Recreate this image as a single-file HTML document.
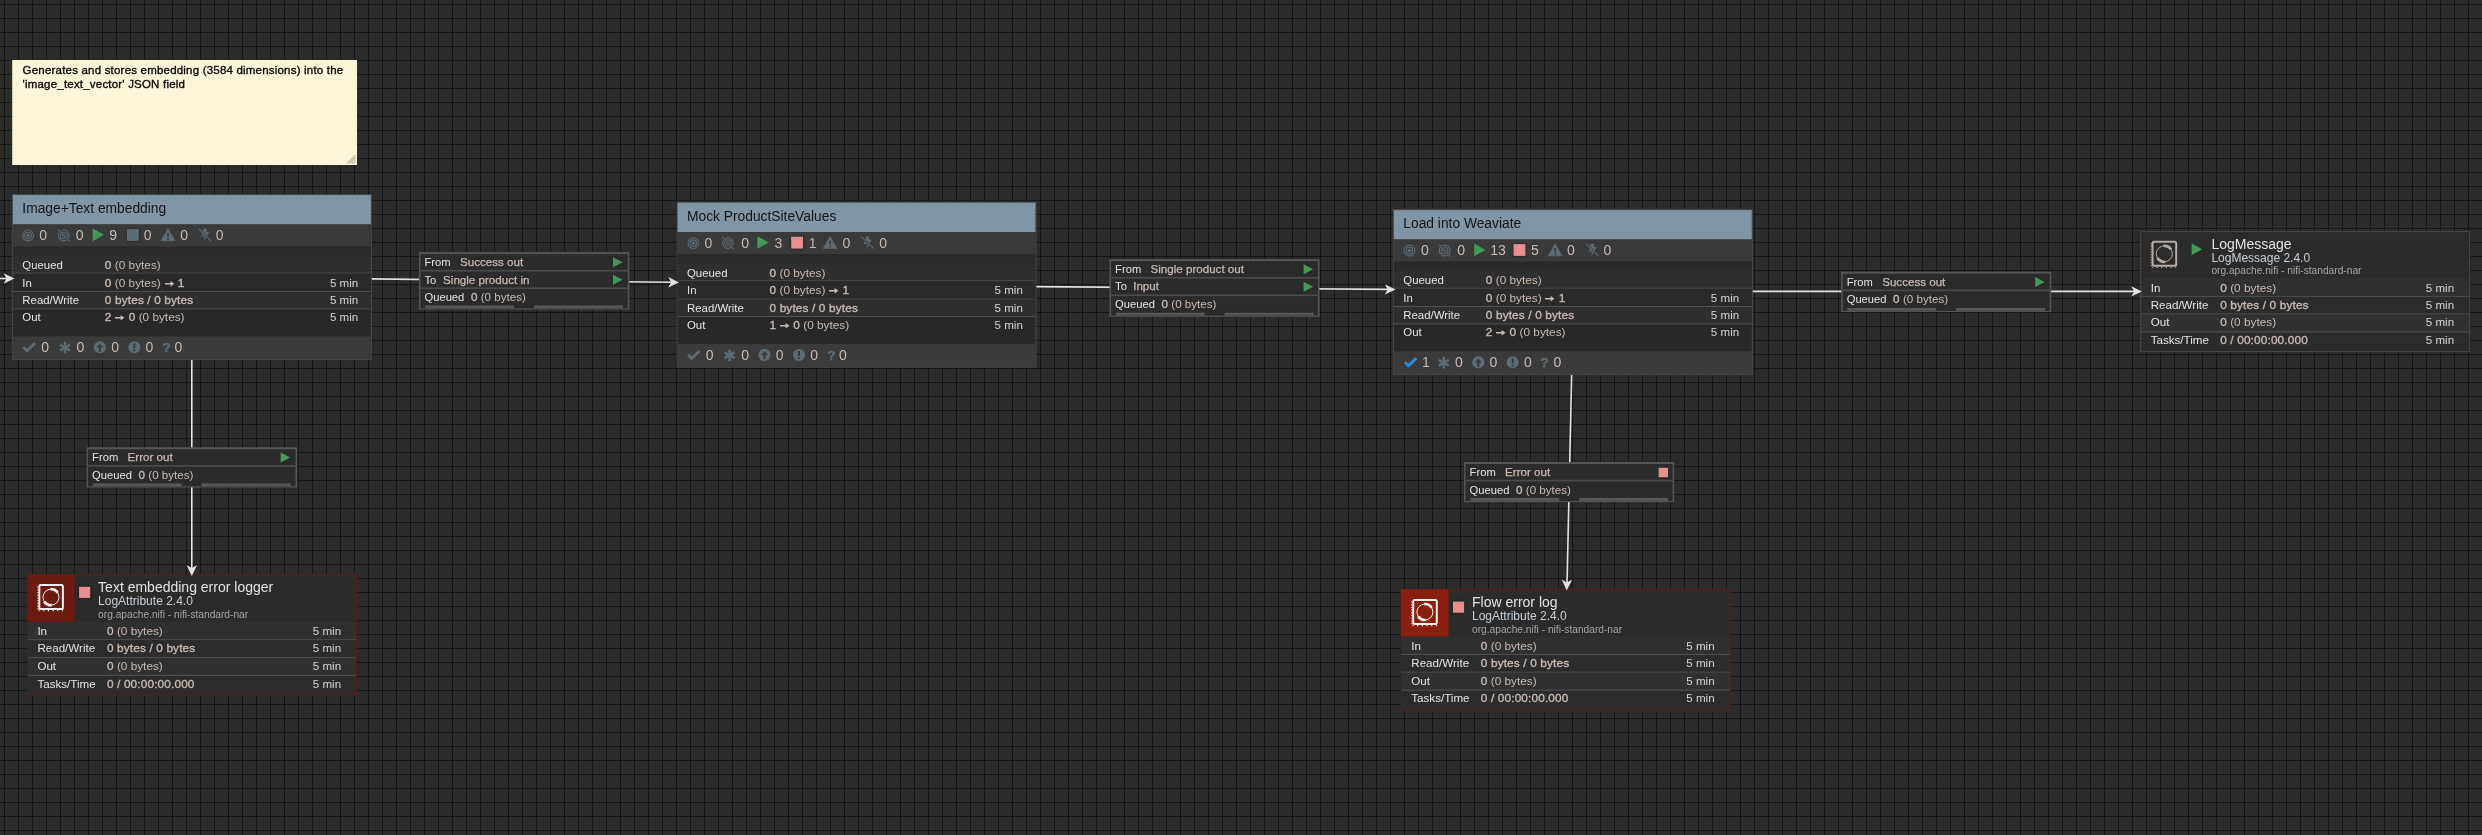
<!DOCTYPE html><html><head><meta charset="utf-8"><style>
html,body{margin:0;padding:0;}
body{width:2482px;height:835px;overflow:hidden;position:relative;background-color:#2b2b2b;
background-image:linear-gradient(to right,#131616 1px,transparent 1px),linear-gradient(to bottom,#131616 1px,transparent 1px);
background-size:14px 14px;background-position:4px 4px;font-family:"Liberation Sans", sans-serif;}
svg.layer{position:absolute;left:0;top:0;}
.txt{position:absolute;left:0;top:0;width:2482px;height:835px;will-change:transform;}
.t{position:absolute;white-space:nowrap;line-height:20px;}
.t b{font-weight:400;-webkit-text-stroke:0.35px currentColor;letter-spacing:0.15px;}
.t .lt{font-weight:400;}
.arw{display:inline-block;vertical-align:0.5px;margin:0 0.5px;}
</style></head><body><svg class="layer" width="2482" height="835" viewBox="0 0 2482 835"><defs><filter id="blur" x="-50%" y="-50%" width="200%" height="200%"><feGaussianBlur stdDeviation="0.8"/></filter></defs><line x1="0" y1="278.5" x2="7" y2="278.5" stroke="#e2e2e2" stroke-width="1.6"/><line x1="371" y1="278.9" x2="672" y2="282.3" stroke="#e2e2e2" stroke-width="1.6"/><line x1="1036" y1="286.6" x2="1389" y2="289.4" stroke="#e2e2e2" stroke-width="1.6"/><line x1="1752" y1="291.4" x2="2135" y2="291.4" stroke="#e2e2e2" stroke-width="1.6"/><line x1="191.8" y1="359" x2="191.8" y2="569" stroke="#e2e2e2" stroke-width="1.6"/><line x1="1571.7" y1="374" x2="1567" y2="584" stroke="#e2e2e2" stroke-width="1.6"/><rect x="12.20" y="60.00" width="344.80" height="105.00" fill="#fdf5d8"/><rect x="11.85" y="194.06" width="360.00" height="166.00" fill="#4a4a4a"/><rect x="12.85" y="195.06" width="358.00" height="164.00" fill="#282828"/><rect x="12.85" y="195.06" width="358.00" height="29.40" fill="#8196a4"/><rect x="12.85" y="224.46" width="358.00" height="22.20" fill="#3a3a3a"/><rect x="12.85" y="246.66" width="358.00" height="9.00" fill="#2a2a2a"/><rect x="12.85" y="255.66" width="358.00" height="17.00" fill="#2f2f2f"/><rect x="12.85" y="272.66" width="358.00" height="1.00" fill="#525252"/><rect x="12.85" y="273.66" width="358.00" height="17.30" fill="#2a2a2a"/><rect x="12.85" y="290.96" width="358.00" height="1.00" fill="#525252"/><rect x="12.85" y="291.96" width="358.00" height="16.40" fill="#2f2f2f"/><rect x="12.85" y="308.36" width="358.00" height="1.00" fill="#525252"/><rect x="12.85" y="336.36" width="358.00" height="22.70" fill="#3b3b3b"/><rect x="676.50" y="201.70" width="360.00" height="166.00" fill="#4a4a4a"/><rect x="677.50" y="202.70" width="358.00" height="164.00" fill="#282828"/><rect x="677.50" y="202.70" width="358.00" height="29.40" fill="#8196a4"/><rect x="677.50" y="232.10" width="358.00" height="22.20" fill="#3a3a3a"/><rect x="677.50" y="254.30" width="358.00" height="9.00" fill="#2a2a2a"/><rect x="677.50" y="263.30" width="358.00" height="17.00" fill="#2f2f2f"/><rect x="677.50" y="280.30" width="358.00" height="1.00" fill="#525252"/><rect x="677.50" y="281.30" width="358.00" height="17.30" fill="#2a2a2a"/><rect x="677.50" y="298.60" width="358.00" height="1.00" fill="#525252"/><rect x="677.50" y="299.60" width="358.00" height="16.40" fill="#2f2f2f"/><rect x="677.50" y="316.00" width="358.00" height="1.00" fill="#525252"/><rect x="677.50" y="344.00" width="358.00" height="22.70" fill="#3b3b3b"/><rect x="1392.80" y="209.10" width="360.00" height="166.00" fill="#4a4a4a"/><rect x="1393.80" y="210.10" width="358.00" height="164.00" fill="#282828"/><rect x="1393.80" y="210.10" width="358.00" height="29.40" fill="#8196a4"/><rect x="1393.80" y="239.50" width="358.00" height="22.20" fill="#3a3a3a"/><rect x="1393.80" y="261.70" width="358.00" height="9.00" fill="#2a2a2a"/><rect x="1393.80" y="270.70" width="358.00" height="17.00" fill="#2f2f2f"/><rect x="1393.80" y="287.70" width="358.00" height="1.00" fill="#525252"/><rect x="1393.80" y="288.70" width="358.00" height="17.30" fill="#2a2a2a"/><rect x="1393.80" y="306.00" width="358.00" height="1.00" fill="#525252"/><rect x="1393.80" y="307.00" width="358.00" height="16.40" fill="#2f2f2f"/><rect x="1393.80" y="323.40" width="358.00" height="1.00" fill="#525252"/><rect x="1393.80" y="351.40" width="358.00" height="22.70" fill="#3b3b3b"/><rect x="418.90" y="252.10" width="210.40" height="57.50" fill="#555555"/><rect x="420.50" y="254.10" width="207.20" height="54.30" fill="#2b2b2b"/><rect x="420.50" y="269.90" width="207.20" height="1.70" fill="#4a4a4a"/><rect x="420.50" y="287.40" width="207.20" height="1.70" fill="#4a4a4a"/><rect x="425.20" y="305.50" width="88.80" height="2.80" fill="#575757"/><rect x="534.00" y="305.50" width="89.00" height="2.80" fill="#575757"/><rect x="1109.50" y="259.10" width="210.00" height="57.70" fill="#555555"/><rect x="1111.10" y="261.10" width="206.80" height="54.50" fill="#2b2b2b"/><rect x="1111.10" y="276.90" width="206.80" height="1.70" fill="#4a4a4a"/><rect x="1111.10" y="294.40" width="206.80" height="1.70" fill="#4a4a4a"/><rect x="1115.80" y="312.70" width="88.80" height="2.80" fill="#575757"/><rect x="1224.60" y="312.70" width="89.00" height="2.80" fill="#575757"/><rect x="1841.10" y="271.70" width="210.20" height="40.40" fill="#555555"/><rect x="1842.70" y="273.70" width="207.00" height="37.20" fill="#2b2b2b"/><rect x="1842.70" y="289.50" width="207.00" height="1.70" fill="#4a4a4a"/><rect x="1847.40" y="308.00" width="88.80" height="2.80" fill="#575757"/><rect x="1956.20" y="308.00" width="89.00" height="2.80" fill="#575757"/><rect x="86.50" y="447.30" width="210.60" height="40.20" fill="#555555"/><rect x="88.10" y="449.30" width="207.40" height="37.00" fill="#2b2b2b"/><rect x="88.10" y="465.10" width="207.40" height="1.70" fill="#4a4a4a"/><rect x="92.80" y="483.40" width="88.80" height="2.80" fill="#575757"/><rect x="201.60" y="483.40" width="89.00" height="2.80" fill="#575757"/><rect x="1464.00" y="462.00" width="210.20" height="40.10" fill="#555555"/><rect x="1465.60" y="464.00" width="207.00" height="36.90" fill="#2b2b2b"/><rect x="1465.60" y="479.80" width="207.00" height="1.70" fill="#4a4a4a"/><rect x="1470.30" y="498.00" width="88.80" height="2.80" fill="#575757"/><rect x="1579.10" y="498.00" width="89.00" height="2.80" fill="#575757"/><rect x="26.90" y="574.50" width="330.20" height="121.20" fill="#2c2c2c"/><rect x="26.90" y="574.50" width="330.20" height="47.30" fill="#2b2b2b"/><rect x="26.90" y="621.80" width="330.20" height="17.50" fill="#303030"/><rect x="26.90" y="639.30" width="330.20" height="1.00" fill="#555555"/><rect x="26.90" y="640.30" width="330.20" height="16.60" fill="#2c2c2c"/><rect x="26.90" y="656.90" width="330.20" height="1.00" fill="#555555"/><rect x="26.90" y="657.90" width="330.20" height="16.90" fill="#313131"/><rect x="26.90" y="674.80" width="330.20" height="1.00" fill="#555555"/><rect x="27.40" y="575.00" width="329.20" height="120.20" fill="none" stroke="#5a1e18" stroke-width="1"/><rect x="26.90" y="574.50" width="47.80" height="47.30" fill="#6c1b10"/><rect x="1400.80" y="589.30" width="329.80" height="121.70" fill="#2c2c2c"/><rect x="1400.80" y="589.30" width="329.80" height="47.30" fill="#2b2b2b"/><rect x="1400.80" y="636.60" width="329.80" height="17.50" fill="#303030"/><rect x="1400.80" y="654.10" width="329.80" height="1.00" fill="#555555"/><rect x="1400.80" y="655.10" width="329.80" height="16.60" fill="#2c2c2c"/><rect x="1400.80" y="671.70" width="329.80" height="1.00" fill="#555555"/><rect x="1400.80" y="672.70" width="329.80" height="16.90" fill="#313131"/><rect x="1400.80" y="689.60" width="329.80" height="1.00" fill="#555555"/><rect x="1401.30" y="589.80" width="328.80" height="120.70" fill="none" stroke="#5a1e18" stroke-width="1"/><rect x="1400.80" y="589.30" width="47.80" height="47.30" fill="#8a1f10"/><rect x="2140.20" y="231.10" width="329.90" height="121.00" fill="#2c2c2c"/><rect x="2140.20" y="231.10" width="329.90" height="47.30" fill="#2b2b2b"/><rect x="2140.20" y="278.40" width="329.90" height="17.50" fill="#303030"/><rect x="2140.20" y="295.90" width="329.90" height="1.00" fill="#555555"/><rect x="2140.20" y="296.90" width="329.90" height="16.60" fill="#2c2c2c"/><rect x="2140.20" y="313.50" width="329.90" height="1.00" fill="#555555"/><rect x="2140.20" y="314.50" width="329.90" height="16.90" fill="#313131"/><rect x="2140.20" y="331.40" width="329.90" height="1.00" fill="#555555"/><rect x="2140.70" y="231.60" width="328.90" height="120.00" fill="none" stroke="#474747" stroke-width="1"/><path d="M14.40 278.50 L3.60 283.70 L6.50 278.50 L3.60 273.30 Z" fill="#e2e2e2"/><path d="M679.00 282.40 L668.14 287.48 L671.10 282.31 L668.26 277.08 Z" fill="#e2e2e2"/><path d="M1395.60 289.50 L1384.76 294.61 L1387.70 289.44 L1384.84 284.21 Z" fill="#e2e2e2"/><path d="M2142.00 291.40 L2131.20 296.60 L2134.10 291.40 L2131.20 286.20 Z" fill="#e2e2e2"/><path d="M191.80 576.00 L186.60 565.20 L191.80 568.10 L197.00 565.20 Z" fill="#e2e2e2"/><path d="M1566.70 590.40 L1561.74 579.49 L1566.87 582.50 L1572.14 579.72 Z" fill="#e2e2e2"/><path d="M355.5 154 L355.5 163.6 L345.8 163.6 Z" fill="#cfcab8"/><g><circle cx="28.15" cy="235.46" r="5.4" fill="none" stroke="#5d6b75" stroke-width="1.1"/><circle cx="28.15" cy="235.46" r="3.2" fill="none" stroke="#5d6b75" stroke-width="1.1"/><circle cx="28.15" cy="235.46" r="1.6" fill="#5d6b75"/></g><g><circle cx="63.75" cy="235.46" r="5.4" fill="none" stroke="#5d6b75" stroke-width="1.1"/><circle cx="63.75" cy="235.46" r="3.2" fill="none" stroke="#5d6b75" stroke-width="1.1"/><circle cx="63.75" cy="235.46" r="1.6" fill="#5d6b75"/><line x1="58.15" y1="229.26000000000002" x2="69.75" y2="241.66" stroke="#3a3a3a" stroke-width="2.2"/><line x1="58.15" y1="229.26000000000002" x2="69.75" y2="241.66" stroke="#5d6b75" stroke-width="1.1"/></g><path d="M92.64999999999999 228.56 L103.94999999999999 234.86 L92.64999999999999 241.16 Z" fill="#43985a"/><rect x="126.14999999999999" y="228.46" width="13.4" height="13.6" fill="#141414" opacity="0.45" filter="url(#blur)"/><rect x="126.94999999999999" y="229.06" width="11.8" height="11.8" fill="#5d6b75"/><path d="M167.95 228.76000000000002 L174.95 240.76000000000002 L160.95 240.76000000000002 Z" fill="#5d6b75" stroke="#5d6b75" stroke-width="0.6" stroke-linejoin="round"/><rect x="167.1" y="233.06000000000003" width="1.7" height="3.8" fill="#3a3a3a"/><rect x="167.1" y="238.16000000000003" width="1.7" height="1.5" fill="#3a3a3a"/><path d="M203.35 228.76 H206.95 L206.35 231.86 L209.25 231.86 L204.04999999999998 241.36 L204.65 236.36 L201.45 236.36 Z" fill="#5d6b75"/><line x1="198.75" y1="228.76" x2="211.15" y2="241.06" stroke="#3a3a3a" stroke-width="2.2"/><line x1="198.75" y1="228.76" x2="211.15" y2="241.06" stroke="#5d6b75" stroke-width="1.1"/><path d="M23.45 347.06000000000006 L26.95 350.76000000000005 L34.849999999999994 343.26000000000005" fill="none" stroke="#5d6b75" stroke-width="2.7"/><g stroke="#5d6b75" stroke-width="2.5"><line x1="64.95" y1="341.86" x2="64.95" y2="353.46000000000004"/><line x1="59.95" y1="344.76000000000005" x2="69.95" y2="350.56"/><line x1="59.95" y1="350.56" x2="69.95" y2="344.76000000000005"/></g><circle cx="99.85" cy="347.26000000000005" r="6.1" fill="#5d6b75"/><path d="M99.85 343.66 L103.44999999999999 347.46000000000004 L100.94999999999999 347.46000000000004 L100.94999999999999 351.66 L98.75 351.66 L98.75 347.46000000000004 L96.25 347.46000000000004 Z" fill="#3b3b3b"/><circle cx="134.35" cy="347.26000000000005" r="6" fill="#5d6b75"/><rect x="133.29999999999998" y="343.36000000000007" width="2.1" height="5" fill="#3b3b3b"/><rect x="133.29999999999998" y="349.46000000000004" width="2.1" height="1.9" fill="#3b3b3b"/><g><circle cx="693.4" cy="243.1" r="5.4" fill="none" stroke="#5d6b75" stroke-width="1.1"/><circle cx="693.4" cy="243.1" r="3.2" fill="none" stroke="#5d6b75" stroke-width="1.1"/><circle cx="693.4" cy="243.1" r="1.6" fill="#5d6b75"/></g><g><circle cx="727.9" cy="243.1" r="5.4" fill="none" stroke="#5d6b75" stroke-width="1.1"/><circle cx="727.9" cy="243.1" r="3.2" fill="none" stroke="#5d6b75" stroke-width="1.1"/><circle cx="727.9" cy="243.1" r="1.6" fill="#5d6b75"/><line x1="722.3" y1="236.9" x2="733.9" y2="249.29999999999998" stroke="#3a3a3a" stroke-width="2.2"/><line x1="722.3" y1="236.9" x2="733.9" y2="249.29999999999998" stroke="#5d6b75" stroke-width="1.1"/></g><path d="M757.4 236.2 L768.6999999999999 242.5 L757.4 248.79999999999998 Z" fill="#43985a"/><rect x="790.4000000000001" y="236.1" width="13.4" height="13.6" fill="#141414" opacity="0.45" filter="url(#blur)"/><rect x="791.2" y="236.7" width="11.8" height="11.8" fill="#e58f8f"/><path d="M830.1 236.4 L837.1 248.4 L823.1 248.4 Z" fill="#5d6b75" stroke="#5d6b75" stroke-width="0.6" stroke-linejoin="round"/><rect x="829.25" y="240.70000000000002" width="1.7" height="3.8" fill="#3a3a3a"/><rect x="829.25" y="245.8" width="1.7" height="1.5" fill="#3a3a3a"/><path d="M865.8 236.39999999999998 H869.4 L868.8 239.5 L871.6999999999999 239.5 L866.5 249.0 L867.0999999999999 244.0 L863.9 244.0 Z" fill="#5d6b75"/><line x1="861.1999999999999" y1="236.39999999999998" x2="873.5999999999999" y2="248.7" stroke="#3a3a3a" stroke-width="2.2"/><line x1="861.1999999999999" y1="236.39999999999998" x2="873.5999999999999" y2="248.7" stroke="#5d6b75" stroke-width="1.1"/><path d="M688.0999999999999 354.70000000000005 L691.5999999999999 358.40000000000003 L699.5 350.90000000000003" fill="none" stroke="#5d6b75" stroke-width="2.7"/><g stroke="#5d6b75" stroke-width="2.5"><line x1="729.6" y1="349.5" x2="729.6" y2="361.1"/><line x1="724.6" y1="352.40000000000003" x2="734.6" y2="358.2"/><line x1="724.6" y1="358.2" x2="734.6" y2="352.40000000000003"/></g><circle cx="764.5" cy="354.90000000000003" r="6.1" fill="#5d6b75"/><path d="M764.5 351.3 L768.1 355.1 L765.6 355.1 L765.6 359.3 L763.4 359.3 L763.4 355.1 L760.9 355.1 Z" fill="#3b3b3b"/><circle cx="799.0" cy="354.90000000000003" r="6" fill="#5d6b75"/><rect x="797.95" y="351.00000000000006" width="2.1" height="5" fill="#3b3b3b"/><rect x="797.95" y="357.1" width="2.1" height="1.9" fill="#3b3b3b"/><g><circle cx="1409.3999999999999" cy="250.49999999999997" r="5.4" fill="none" stroke="#5d6b75" stroke-width="1.1"/><circle cx="1409.3999999999999" cy="250.49999999999997" r="3.2" fill="none" stroke="#5d6b75" stroke-width="1.1"/><circle cx="1409.3999999999999" cy="250.49999999999997" r="1.6" fill="#5d6b75"/></g><g><circle cx="1444.6999999999998" cy="250.49999999999997" r="5.4" fill="none" stroke="#5d6b75" stroke-width="1.1"/><circle cx="1444.6999999999998" cy="250.49999999999997" r="3.2" fill="none" stroke="#5d6b75" stroke-width="1.1"/><circle cx="1444.6999999999998" cy="250.49999999999997" r="1.6" fill="#5d6b75"/><line x1="1439.1" y1="244.29999999999998" x2="1450.6999999999998" y2="256.7" stroke="#3a3a3a" stroke-width="2.2"/><line x1="1439.1" y1="244.29999999999998" x2="1450.6999999999998" y2="256.7" stroke="#5d6b75" stroke-width="1.1"/></g><path d="M1474.2 243.59999999999997 L1485.5 249.89999999999998 L1474.2 256.2 Z" fill="#43985a"/><rect x="1512.8" y="243.49999999999997" width="13.4" height="13.6" fill="#141414" opacity="0.45" filter="url(#blur)"/><rect x="1513.6" y="244.09999999999997" width="11.8" height="11.8" fill="#e58f8f"/><path d="M1555.1 243.79999999999998 L1562.1 255.79999999999998 L1548.1 255.79999999999998 Z" fill="#5d6b75" stroke="#5d6b75" stroke-width="0.6" stroke-linejoin="round"/><rect x="1554.25" y="248.1" width="1.7" height="3.8" fill="#3a3a3a"/><rect x="1554.25" y="253.2" width="1.7" height="1.5" fill="#3a3a3a"/><path d="M1590.8 243.79999999999995 H1594.3999999999999 L1593.8 246.89999999999998 L1596.7 246.89999999999998 L1591.5 256.4 L1592.1 251.39999999999998 L1588.8999999999999 251.39999999999998 Z" fill="#5d6b75"/><line x1="1586.2" y1="243.79999999999995" x2="1598.6" y2="256.09999999999997" stroke="#3a3a3a" stroke-width="2.2"/><line x1="1586.2" y1="243.79999999999995" x2="1598.6" y2="256.09999999999997" stroke="#5d6b75" stroke-width="1.1"/><path d="M1404.8999999999999 362.1 L1408.3999999999999 365.8 L1416.3 358.3" fill="none" stroke="#2e8de0" stroke-width="2.7"/><g stroke="#5d6b75" stroke-width="2.5"><line x1="1443.8" y1="356.9" x2="1443.8" y2="368.5"/><line x1="1438.8" y1="359.8" x2="1448.8" y2="365.59999999999997"/><line x1="1438.8" y1="365.59999999999997" x2="1448.8" y2="359.8"/></g><circle cx="1478.3" cy="362.3" r="6.1" fill="#5d6b75"/><path d="M1478.3 358.7 L1481.8999999999999 362.5 L1479.3999999999999 362.5 L1479.3999999999999 366.7 L1477.2 366.7 L1477.2 362.5 L1474.7 362.5 Z" fill="#3b3b3b"/><circle cx="1512.7" cy="362.3" r="6" fill="#5d6b75"/><rect x="1511.65" y="358.40000000000003" width="2.1" height="5" fill="#3b3b3b"/><rect x="1511.65" y="364.5" width="2.1" height="1.9" fill="#3b3b3b"/><path d="M613.0 257.3 L622.6 262.3 L613.0 267.3 Z" fill="#43985a"/><path d="M613.0 274.8 L622.6 279.8 L613.0 284.8 Z" fill="#43985a"/><path d="M1303.6 264.3 L1313.1999999999998 269.3 L1303.6 274.3 Z" fill="#43985a"/><path d="M1303.6 281.8 L1313.1999999999998 286.8 L1303.6 291.8 Z" fill="#43985a"/><path d="M2035.1999999999998 276.9 L2044.7999999999997 281.9 L2035.1999999999998 286.9 Z" fill="#43985a"/><path d="M280.6 452.5 L290.20000000000005 457.5 L280.6 462.5 Z" fill="#43985a"/><rect x="1658.6" y="467.8" width="9.4" height="9.4" fill="#e58f8f"/><rect x="39.3" y="585.1" width="23.6" height="24" rx="1.6" fill="none" stroke="#f4eeec" stroke-width="2"/><path d="M37.9 586.7 V610.0" stroke="#f4eeec" stroke-width="1.1" stroke-dasharray="1.1 1.6" fill="none"/><path d="M38.5 610.7 H62.9" stroke="#f4eeec" stroke-width="1.3" stroke-dasharray="1.1 3.6" fill="none"/><circle cx="51.0" cy="597.2" r="8.0" fill="none" stroke="#f4eeec" stroke-width="1.0"/><path d="M50.30 589.23 A8.0 8.0 0 0 1 57.78 592.96" fill="none" stroke="#f4eeec" stroke-width="2.7"/><path d="M51.70 605.17 A8.0 8.0 0 0 1 44.22 601.44" fill="none" stroke="#f4eeec" stroke-width="2.7"/><rect x="78.1" y="585.8" width="13" height="13" fill="#1c1c1c" opacity="0.5" filter="url(#blur)"/><rect x="79.1" y="586.8" width="11.1" height="11.1" fill="#e58f8f"/><rect x="1413.2" y="599.9" width="23.6" height="24" rx="1.6" fill="none" stroke="#f4eeec" stroke-width="2"/><path d="M1411.8 601.5 V624.8" stroke="#f4eeec" stroke-width="1.1" stroke-dasharray="1.1 1.6" fill="none"/><path d="M1412.3999999999999 625.5 H1436.8" stroke="#f4eeec" stroke-width="1.3" stroke-dasharray="1.1 3.6" fill="none"/><circle cx="1424.8999999999999" cy="612.0" r="8.0" fill="none" stroke="#f4eeec" stroke-width="1.0"/><path d="M1424.20 604.03 A8.0 8.0 0 0 1 1431.68 607.76" fill="none" stroke="#f4eeec" stroke-width="2.7"/><path d="M1425.60 619.97 A8.0 8.0 0 0 1 1418.12 616.24" fill="none" stroke="#f4eeec" stroke-width="2.7"/><rect x="1452.0" y="600.5999999999999" width="13" height="13" fill="#1c1c1c" opacity="0.5" filter="url(#blur)"/><rect x="1453.0" y="601.5999999999999" width="11.1" height="11.1" fill="#e58f8f"/><rect x="2152.6" y="241.7" width="23.6" height="24" rx="1.6" fill="none" stroke="#b6aaa3" stroke-width="2"/><path d="M2151.2 243.29999999999998 V266.6" stroke="#b6aaa3" stroke-width="1.1" stroke-dasharray="1.1 1.6" fill="none"/><path d="M2151.7999999999997 267.3 H2176.2" stroke="#b6aaa3" stroke-width="1.3" stroke-dasharray="1.1 3.6" fill="none"/><circle cx="2164.2999999999997" cy="253.79999999999998" r="8.0" fill="none" stroke="#b6aaa3" stroke-width="1.0"/><path d="M2163.60 245.83 A8.0 8.0 0 0 1 2171.08 249.56" fill="none" stroke="#b6aaa3" stroke-width="2.7"/><path d="M2165.00 261.77 A8.0 8.0 0 0 1 2157.52 258.04" fill="none" stroke="#b6aaa3" stroke-width="2.7"/><path d="M2191.7 243.6 L2202.2 249.25 L2191.7 254.9 Z" fill="#43985a"/></svg><div class="txt"><div class="t" style="left:22.60px;top:60px;font-size:11.5px;color:#0a0a0a;font-weight:400;-webkit-text-stroke:0.35px #0a0a0a;letter-spacing:0.2px">Generates and stores embedding (3584 dimensions) into the</div><div class="t" style="left:22.60px;top:74px;font-size:11.5px;color:#0a0a0a;font-weight:400;-webkit-text-stroke:0.35px #0a0a0a;letter-spacing:0.2px">'image_text_vector' JSON field</div><div class="t" style="left:22.35px;top:199px;font-size:13.8px;color:#141414;font-weight:400;">Image+Text embedding</div><div class="t" style="left:39.15px;top:225px;font-size:14px;color:#c9bab2;font-weight:400;font-weight:400">0</div><div class="t" style="left:75.85px;top:225px;font-size:14px;color:#c9bab2;font-weight:400;">0</div><div class="t" style="left:109.25px;top:225px;font-size:14px;color:#c9bab2;font-weight:400;">9</div><div class="t" style="left:143.75px;top:225px;font-size:14px;color:#c9bab2;font-weight:400;">0</div><div class="t" style="left:180.35px;top:225px;font-size:14px;color:#c9bab2;font-weight:400;">0</div><div class="t" style="left:215.85px;top:225px;font-size:14px;color:#c9bab2;font-weight:400;">0</div><div class="t" style="left:22.35px;top:255px;font-size:11.4px;color:#e4e4e4;font-weight:400;">Queued</div><div class="t" style="left:104.85px;top:255px;font-size:11.8px;color:#c9bab2;font-weight:400;"><b>0</b> <span class="lt">(0 bytes)</span></div><div class="t" style="left:22.35px;top:273px;font-size:11.4px;color:#e4e4e4;font-weight:400;">In</div><div class="t" style="left:104.85px;top:273px;font-size:11.8px;color:#c9bab2;font-weight:400;"><b>0</b> <span class="lt">(0 bytes)</span> <svg class="arw" width="9.5" height="5.5" viewBox="0 0 9.5 5.5"><path d="M0 2.1 H5.6 V0 L9.5 2.75 L5.6 5.5 V3.4 H0 Z" fill="currentColor"/></svg> <b>1</b></div><div class="t" style="left:358.25px;top:273px;font-size:11.6px;color:#d4d4d4;font-weight:400;transform:translateX(-100%);">5 min</div><div class="t" style="left:22.35px;top:290px;font-size:11.4px;color:#e4e4e4;font-weight:400;">Read/Write</div><div class="t" style="left:104.85px;top:290px;font-size:11.8px;color:#c9bab2;font-weight:400;"><b>0 bytes / 0 bytes</b></div><div class="t" style="left:358.25px;top:290px;font-size:11.6px;color:#d4d4d4;font-weight:400;transform:translateX(-100%);">5 min</div><div class="t" style="left:22.35px;top:307px;font-size:11.4px;color:#e4e4e4;font-weight:400;">Out</div><div class="t" style="left:104.85px;top:307px;font-size:11.8px;color:#c9bab2;font-weight:400;"><b>2</b> <svg class="arw" width="9.5" height="5.5" viewBox="0 0 9.5 5.5"><path d="M0 2.1 H5.6 V0 L9.5 2.75 L5.6 5.5 V3.4 H0 Z" fill="currentColor"/></svg> <b>0</b> <span class="lt">(0 bytes)</span></div><div class="t" style="left:358.25px;top:307px;font-size:11.6px;color:#d4d4d4;font-weight:400;transform:translateX(-100%);">5 min</div><div class="t" style="left:41.15px;top:337px;font-size:14px;color:#c9bab2;font-weight:400;">0</div><div class="t" style="left:76.55px;top:337px;font-size:14px;color:#c9bab2;font-weight:400;">0</div><div class="t" style="left:111.15px;top:337px;font-size:14px;color:#c9bab2;font-weight:400;">0</div><div class="t" style="left:145.55px;top:337px;font-size:14px;color:#c9bab2;font-weight:400;">0</div><div class="t" style="left:162.55px;top:338px;font-size:13.5px;color:#5d6b75;font-weight:700;-webkit-text-stroke:0.5px currentColor">?</div><div class="t" style="left:174.45px;top:337px;font-size:14px;color:#c9bab2;font-weight:400;">0</div><div class="t" style="left:687.00px;top:207px;font-size:13.8px;color:#141414;font-weight:400;">Mock ProductSiteValues</div><div class="t" style="left:704.60px;top:233px;font-size:14px;color:#c9bab2;font-weight:400;font-weight:400">0</div><div class="t" style="left:741.20px;top:233px;font-size:14px;color:#c9bab2;font-weight:400;">0</div><div class="t" style="left:774.60px;top:233px;font-size:14px;color:#c9bab2;font-weight:400;">3</div><div class="t" style="left:808.70px;top:233px;font-size:14px;color:#c9bab2;font-weight:400;">1</div><div class="t" style="left:842.40px;top:233px;font-size:14px;color:#c9bab2;font-weight:400;">0</div><div class="t" style="left:879.20px;top:233px;font-size:14px;color:#c9bab2;font-weight:400;">0</div><div class="t" style="left:687.00px;top:263px;font-size:11.4px;color:#e4e4e4;font-weight:400;">Queued</div><div class="t" style="left:769.50px;top:263px;font-size:11.8px;color:#c9bab2;font-weight:400;"><b>0</b> <span class="lt">(0 bytes)</span></div><div class="t" style="left:687.00px;top:280px;font-size:11.4px;color:#e4e4e4;font-weight:400;">In</div><div class="t" style="left:769.50px;top:280px;font-size:11.8px;color:#c9bab2;font-weight:400;"><b>0</b> <span class="lt">(0 bytes)</span> <svg class="arw" width="9.5" height="5.5" viewBox="0 0 9.5 5.5"><path d="M0 2.1 H5.6 V0 L9.5 2.75 L5.6 5.5 V3.4 H0 Z" fill="currentColor"/></svg> <b>1</b></div><div class="t" style="left:1022.90px;top:280px;font-size:11.6px;color:#d4d4d4;font-weight:400;transform:translateX(-100%);">5 min</div><div class="t" style="left:687.00px;top:298px;font-size:11.4px;color:#e4e4e4;font-weight:400;">Read/Write</div><div class="t" style="left:769.50px;top:298px;font-size:11.8px;color:#c9bab2;font-weight:400;"><b>0 bytes / 0 bytes</b></div><div class="t" style="left:1022.90px;top:298px;font-size:11.6px;color:#d4d4d4;font-weight:400;transform:translateX(-100%);">5 min</div><div class="t" style="left:687.00px;top:315px;font-size:11.4px;color:#e4e4e4;font-weight:400;">Out</div><div class="t" style="left:769.50px;top:315px;font-size:11.8px;color:#c9bab2;font-weight:400;"><b>1</b> <svg class="arw" width="9.5" height="5.5" viewBox="0 0 9.5 5.5"><path d="M0 2.1 H5.6 V0 L9.5 2.75 L5.6 5.5 V3.4 H0 Z" fill="currentColor"/></svg> <b>0</b> <span class="lt">(0 bytes)</span></div><div class="t" style="left:1022.90px;top:315px;font-size:11.6px;color:#d4d4d4;font-weight:400;transform:translateX(-100%);">5 min</div><div class="t" style="left:705.80px;top:345px;font-size:14px;color:#c9bab2;font-weight:400;">0</div><div class="t" style="left:741.20px;top:345px;font-size:14px;color:#c9bab2;font-weight:400;">0</div><div class="t" style="left:775.80px;top:345px;font-size:14px;color:#c9bab2;font-weight:400;">0</div><div class="t" style="left:810.20px;top:345px;font-size:14px;color:#c9bab2;font-weight:400;">0</div><div class="t" style="left:827.20px;top:346px;font-size:13.5px;color:#5d6b75;font-weight:700;-webkit-text-stroke:0.5px currentColor">?</div><div class="t" style="left:839.10px;top:345px;font-size:14px;color:#c9bab2;font-weight:400;">0</div><div class="t" style="left:1403.30px;top:214px;font-size:13.8px;color:#141414;font-weight:400;">Load into Weaviate</div><div class="t" style="left:1421.00px;top:240px;font-size:14px;color:#c9bab2;font-weight:400;font-weight:400">0</div><div class="t" style="left:1457.20px;top:240px;font-size:14px;color:#c9bab2;font-weight:400;">0</div><div class="t" style="left:1490.30px;top:240px;font-size:14px;color:#c9bab2;font-weight:400;">13</div><div class="t" style="left:1530.90px;top:240px;font-size:14px;color:#c9bab2;font-weight:400;">5</div><div class="t" style="left:1567.00px;top:240px;font-size:14px;color:#c9bab2;font-weight:400;">0</div><div class="t" style="left:1603.50px;top:240px;font-size:14px;color:#c9bab2;font-weight:400;">0</div><div class="t" style="left:1403.30px;top:270px;font-size:11.4px;color:#e4e4e4;font-weight:400;">Queued</div><div class="t" style="left:1485.80px;top:270px;font-size:11.8px;color:#c9bab2;font-weight:400;"><b>0</b> <span class="lt">(0 bytes)</span></div><div class="t" style="left:1403.30px;top:288px;font-size:11.4px;color:#e4e4e4;font-weight:400;">In</div><div class="t" style="left:1485.80px;top:288px;font-size:11.8px;color:#c9bab2;font-weight:400;"><b>0</b> <span class="lt">(0 bytes)</span> <svg class="arw" width="9.5" height="5.5" viewBox="0 0 9.5 5.5"><path d="M0 2.1 H5.6 V0 L9.5 2.75 L5.6 5.5 V3.4 H0 Z" fill="currentColor"/></svg> <b>1</b></div><div class="t" style="left:1739.20px;top:288px;font-size:11.6px;color:#d4d4d4;font-weight:400;transform:translateX(-100%);">5 min</div><div class="t" style="left:1403.30px;top:305px;font-size:11.4px;color:#e4e4e4;font-weight:400;">Read/Write</div><div class="t" style="left:1485.80px;top:305px;font-size:11.8px;color:#c9bab2;font-weight:400;"><b>0 bytes / 0 bytes</b></div><div class="t" style="left:1739.20px;top:305px;font-size:11.6px;color:#d4d4d4;font-weight:400;transform:translateX(-100%);">5 min</div><div class="t" style="left:1403.30px;top:322px;font-size:11.4px;color:#e4e4e4;font-weight:400;">Out</div><div class="t" style="left:1485.80px;top:322px;font-size:11.8px;color:#c9bab2;font-weight:400;"><b>2</b> <svg class="arw" width="9.5" height="5.5" viewBox="0 0 9.5 5.5"><path d="M0 2.1 H5.6 V0 L9.5 2.75 L5.6 5.5 V3.4 H0 Z" fill="currentColor"/></svg> <b>0</b> <span class="lt">(0 bytes)</span></div><div class="t" style="left:1739.20px;top:322px;font-size:11.6px;color:#d4d4d4;font-weight:400;transform:translateX(-100%);">5 min</div><div class="t" style="left:1422.00px;top:352px;font-size:14px;color:#c9bab2;font-weight:400;">1</div><div class="t" style="left:1455.00px;top:352px;font-size:14px;color:#c9bab2;font-weight:400;">0</div><div class="t" style="left:1489.50px;top:352px;font-size:14px;color:#c9bab2;font-weight:400;">0</div><div class="t" style="left:1524.00px;top:352px;font-size:14px;color:#c9bab2;font-weight:400;">0</div><div class="t" style="left:1540.60px;top:353px;font-size:13.5px;color:#5d6b75;font-weight:700;-webkit-text-stroke:0.5px currentColor">?</div><div class="t" style="left:1553.50px;top:352px;font-size:14px;color:#c9bab2;font-weight:400;">0</div><div class="t" style="left:424.50px;top:252px;font-size:11.2px;color:#e4e4e4;font-weight:400;">From</div><div class="t" style="left:460.00px;top:252px;font-size:11.6px;color:#c9bab2;font-weight:400;-webkit-text-stroke:0.25px currentColor">Success out</div><div class="t" style="left:424.50px;top:270px;font-size:11.2px;color:#e4e4e4;font-weight:400;">To</div><div class="t" style="left:443.10px;top:270px;font-size:11.6px;color:#c9bab2;font-weight:400;-webkit-text-stroke:0.25px currentColor">Single product in</div><div class="t" style="left:424.50px;top:287px;font-size:11.2px;color:#e4e4e4;font-weight:400;">Queued</div><div class="t" style="left:470.90px;top:287px;font-size:11.6px;color:#c9bab2;font-weight:400;"><b>0</b> <span class="lt">(0 bytes)</span></div><div class="t" style="left:1115.10px;top:259px;font-size:11.2px;color:#e4e4e4;font-weight:400;">From</div><div class="t" style="left:1150.50px;top:259px;font-size:11.6px;color:#c9bab2;font-weight:400;-webkit-text-stroke:0.25px currentColor">Single product out</div><div class="t" style="left:1115.10px;top:276px;font-size:11.2px;color:#e4e4e4;font-weight:400;">To</div><div class="t" style="left:1133.20px;top:276px;font-size:11.6px;color:#c9bab2;font-weight:400;-webkit-text-stroke:0.25px currentColor">Input</div><div class="t" style="left:1115.10px;top:294px;font-size:11.2px;color:#e4e4e4;font-weight:400;">Queued</div><div class="t" style="left:1161.50px;top:294px;font-size:11.6px;color:#c9bab2;font-weight:400;"><b>0</b> <span class="lt">(0 bytes)</span></div><div class="t" style="left:1846.70px;top:272px;font-size:11.2px;color:#e4e4e4;font-weight:400;">From</div><div class="t" style="left:1882.20px;top:272px;font-size:11.6px;color:#c9bab2;font-weight:400;-webkit-text-stroke:0.25px currentColor">Success out</div><div class="t" style="left:1846.70px;top:289px;font-size:11.2px;color:#e4e4e4;font-weight:400;">Queued</div><div class="t" style="left:1893.10px;top:289px;font-size:11.6px;color:#c9bab2;font-weight:400;"><b>0</b> <span class="lt">(0 bytes)</span></div><div class="t" style="left:92.10px;top:447px;font-size:11.2px;color:#e4e4e4;font-weight:400;">From</div><div class="t" style="left:127.60px;top:447px;font-size:11.6px;color:#c9bab2;font-weight:400;-webkit-text-stroke:0.25px currentColor">Error out</div><div class="t" style="left:92.10px;top:465px;font-size:11.2px;color:#e4e4e4;font-weight:400;">Queued</div><div class="t" style="left:138.50px;top:465px;font-size:11.6px;color:#c9bab2;font-weight:400;"><b>0</b> <span class="lt">(0 bytes)</span></div><div class="t" style="left:1469.60px;top:462px;font-size:11.2px;color:#e4e4e4;font-weight:400;">From</div><div class="t" style="left:1505.10px;top:462px;font-size:11.6px;color:#c9bab2;font-weight:400;-webkit-text-stroke:0.25px currentColor">Error out</div><div class="t" style="left:1469.60px;top:480px;font-size:11.2px;color:#e4e4e4;font-weight:400;">Queued</div><div class="t" style="left:1516.00px;top:480px;font-size:11.6px;color:#c9bab2;font-weight:400;"><b>0</b> <span class="lt">(0 bytes)</span></div><div class="t" style="left:98.10px;top:577px;font-size:14px;color:#e2e2e2;font-weight:400;">Text embedding error logger</div><div class="t" style="left:98.10px;top:591px;font-size:12px;color:#c6d0d8;font-weight:400;">LogAttribute 2.4.0</div><div class="t" style="left:98.10px;top:605px;font-size:10.2px;color:#a6a6a6;font-weight:400;">org.apache.nifi - nifi-standard-nar</div><div class="t" style="left:37.40px;top:621px;font-size:11.6px;color:#e4e4e4;font-weight:400;">In</div><div class="t" style="left:106.90px;top:621px;font-size:11.8px;color:#c9bab2;font-weight:400;"><b>0</b> <span class="lt">(0 bytes)</span></div><div class="t" style="left:341.10px;top:621px;font-size:11.6px;color:#d4d4d4;font-weight:400;transform:translateX(-100%);">5 min</div><div class="t" style="left:37.40px;top:638px;font-size:11.6px;color:#e4e4e4;font-weight:400;">Read/Write</div><div class="t" style="left:106.90px;top:638px;font-size:11.8px;color:#c9bab2;font-weight:400;"><b>0 bytes / 0 bytes</b></div><div class="t" style="left:341.10px;top:638px;font-size:11.6px;color:#d4d4d4;font-weight:400;transform:translateX(-100%);">5 min</div><div class="t" style="left:37.40px;top:656px;font-size:11.6px;color:#e4e4e4;font-weight:400;">Out</div><div class="t" style="left:106.90px;top:656px;font-size:11.8px;color:#c9bab2;font-weight:400;"><b>0</b> <span class="lt">(0 bytes)</span></div><div class="t" style="left:341.10px;top:656px;font-size:11.6px;color:#d4d4d4;font-weight:400;transform:translateX(-100%);">5 min</div><div class="t" style="left:37.40px;top:674px;font-size:11.6px;color:#e4e4e4;font-weight:400;">Tasks/Time</div><div class="t" style="left:106.90px;top:674px;font-size:11.8px;color:#c9bab2;font-weight:400;"><b>0 / 00:00:00.000</b></div><div class="t" style="left:341.10px;top:674px;font-size:11.6px;color:#d4d4d4;font-weight:400;transform:translateX(-100%);">5 min</div><div class="t" style="left:1472.00px;top:592px;font-size:14px;color:#e2e2e2;font-weight:400;">Flow error log</div><div class="t" style="left:1472.00px;top:606px;font-size:12px;color:#c6d0d8;font-weight:400;">LogAttribute 2.4.0</div><div class="t" style="left:1472.00px;top:620px;font-size:10.2px;color:#a6a6a6;font-weight:400;">org.apache.nifi - nifi-standard-nar</div><div class="t" style="left:1411.30px;top:636px;font-size:11.6px;color:#e4e4e4;font-weight:400;">In</div><div class="t" style="left:1480.80px;top:636px;font-size:11.8px;color:#c9bab2;font-weight:400;"><b>0</b> <span class="lt">(0 bytes)</span></div><div class="t" style="left:1714.60px;top:636px;font-size:11.6px;color:#d4d4d4;font-weight:400;transform:translateX(-100%);">5 min</div><div class="t" style="left:1411.30px;top:653px;font-size:11.6px;color:#e4e4e4;font-weight:400;">Read/Write</div><div class="t" style="left:1480.80px;top:653px;font-size:11.8px;color:#c9bab2;font-weight:400;"><b>0 bytes / 0 bytes</b></div><div class="t" style="left:1714.60px;top:653px;font-size:11.6px;color:#d4d4d4;font-weight:400;transform:translateX(-100%);">5 min</div><div class="t" style="left:1411.30px;top:671px;font-size:11.6px;color:#e4e4e4;font-weight:400;">Out</div><div class="t" style="left:1480.80px;top:671px;font-size:11.8px;color:#c9bab2;font-weight:400;"><b>0</b> <span class="lt">(0 bytes)</span></div><div class="t" style="left:1714.60px;top:671px;font-size:11.6px;color:#d4d4d4;font-weight:400;transform:translateX(-100%);">5 min</div><div class="t" style="left:1411.30px;top:688px;font-size:11.6px;color:#e4e4e4;font-weight:400;">Tasks/Time</div><div class="t" style="left:1480.80px;top:688px;font-size:11.8px;color:#c9bab2;font-weight:400;"><b>0 / 00:00:00.000</b></div><div class="t" style="left:1714.60px;top:688px;font-size:11.6px;color:#d4d4d4;font-weight:400;transform:translateX(-100%);">5 min</div><div class="t" style="left:2211.40px;top:234px;font-size:14px;color:#e2e2e2;font-weight:400;">LogMessage</div><div class="t" style="left:2211.40px;top:248px;font-size:12px;color:#c6d0d8;font-weight:400;">LogMessage 2.4.0</div><div class="t" style="left:2211.40px;top:261px;font-size:10.2px;color:#a6a6a6;font-weight:400;">org.apache.nifi - nifi-standard-nar</div><div class="t" style="left:2150.70px;top:278px;font-size:11.6px;color:#e4e4e4;font-weight:400;">In</div><div class="t" style="left:2220.20px;top:278px;font-size:11.8px;color:#c9bab2;font-weight:400;"><b>0</b> <span class="lt">(0 bytes)</span></div><div class="t" style="left:2454.10px;top:278px;font-size:11.6px;color:#d4d4d4;font-weight:400;transform:translateX(-100%);">5 min</div><div class="t" style="left:2150.70px;top:295px;font-size:11.6px;color:#e4e4e4;font-weight:400;">Read/Write</div><div class="t" style="left:2220.20px;top:295px;font-size:11.8px;color:#c9bab2;font-weight:400;"><b>0 bytes / 0 bytes</b></div><div class="t" style="left:2454.10px;top:295px;font-size:11.6px;color:#d4d4d4;font-weight:400;transform:translateX(-100%);">5 min</div><div class="t" style="left:2150.70px;top:312px;font-size:11.6px;color:#e4e4e4;font-weight:400;">Out</div><div class="t" style="left:2220.20px;top:312px;font-size:11.8px;color:#c9bab2;font-weight:400;"><b>0</b> <span class="lt">(0 bytes)</span></div><div class="t" style="left:2454.10px;top:312px;font-size:11.6px;color:#d4d4d4;font-weight:400;transform:translateX(-100%);">5 min</div><div class="t" style="left:2150.70px;top:330px;font-size:11.6px;color:#e4e4e4;font-weight:400;">Tasks/Time</div><div class="t" style="left:2220.20px;top:330px;font-size:11.8px;color:#c9bab2;font-weight:400;"><b>0 / 00:00:00.000</b></div><div class="t" style="left:2454.10px;top:330px;font-size:11.6px;color:#d4d4d4;font-weight:400;transform:translateX(-100%);">5 min</div></div></body></html>
